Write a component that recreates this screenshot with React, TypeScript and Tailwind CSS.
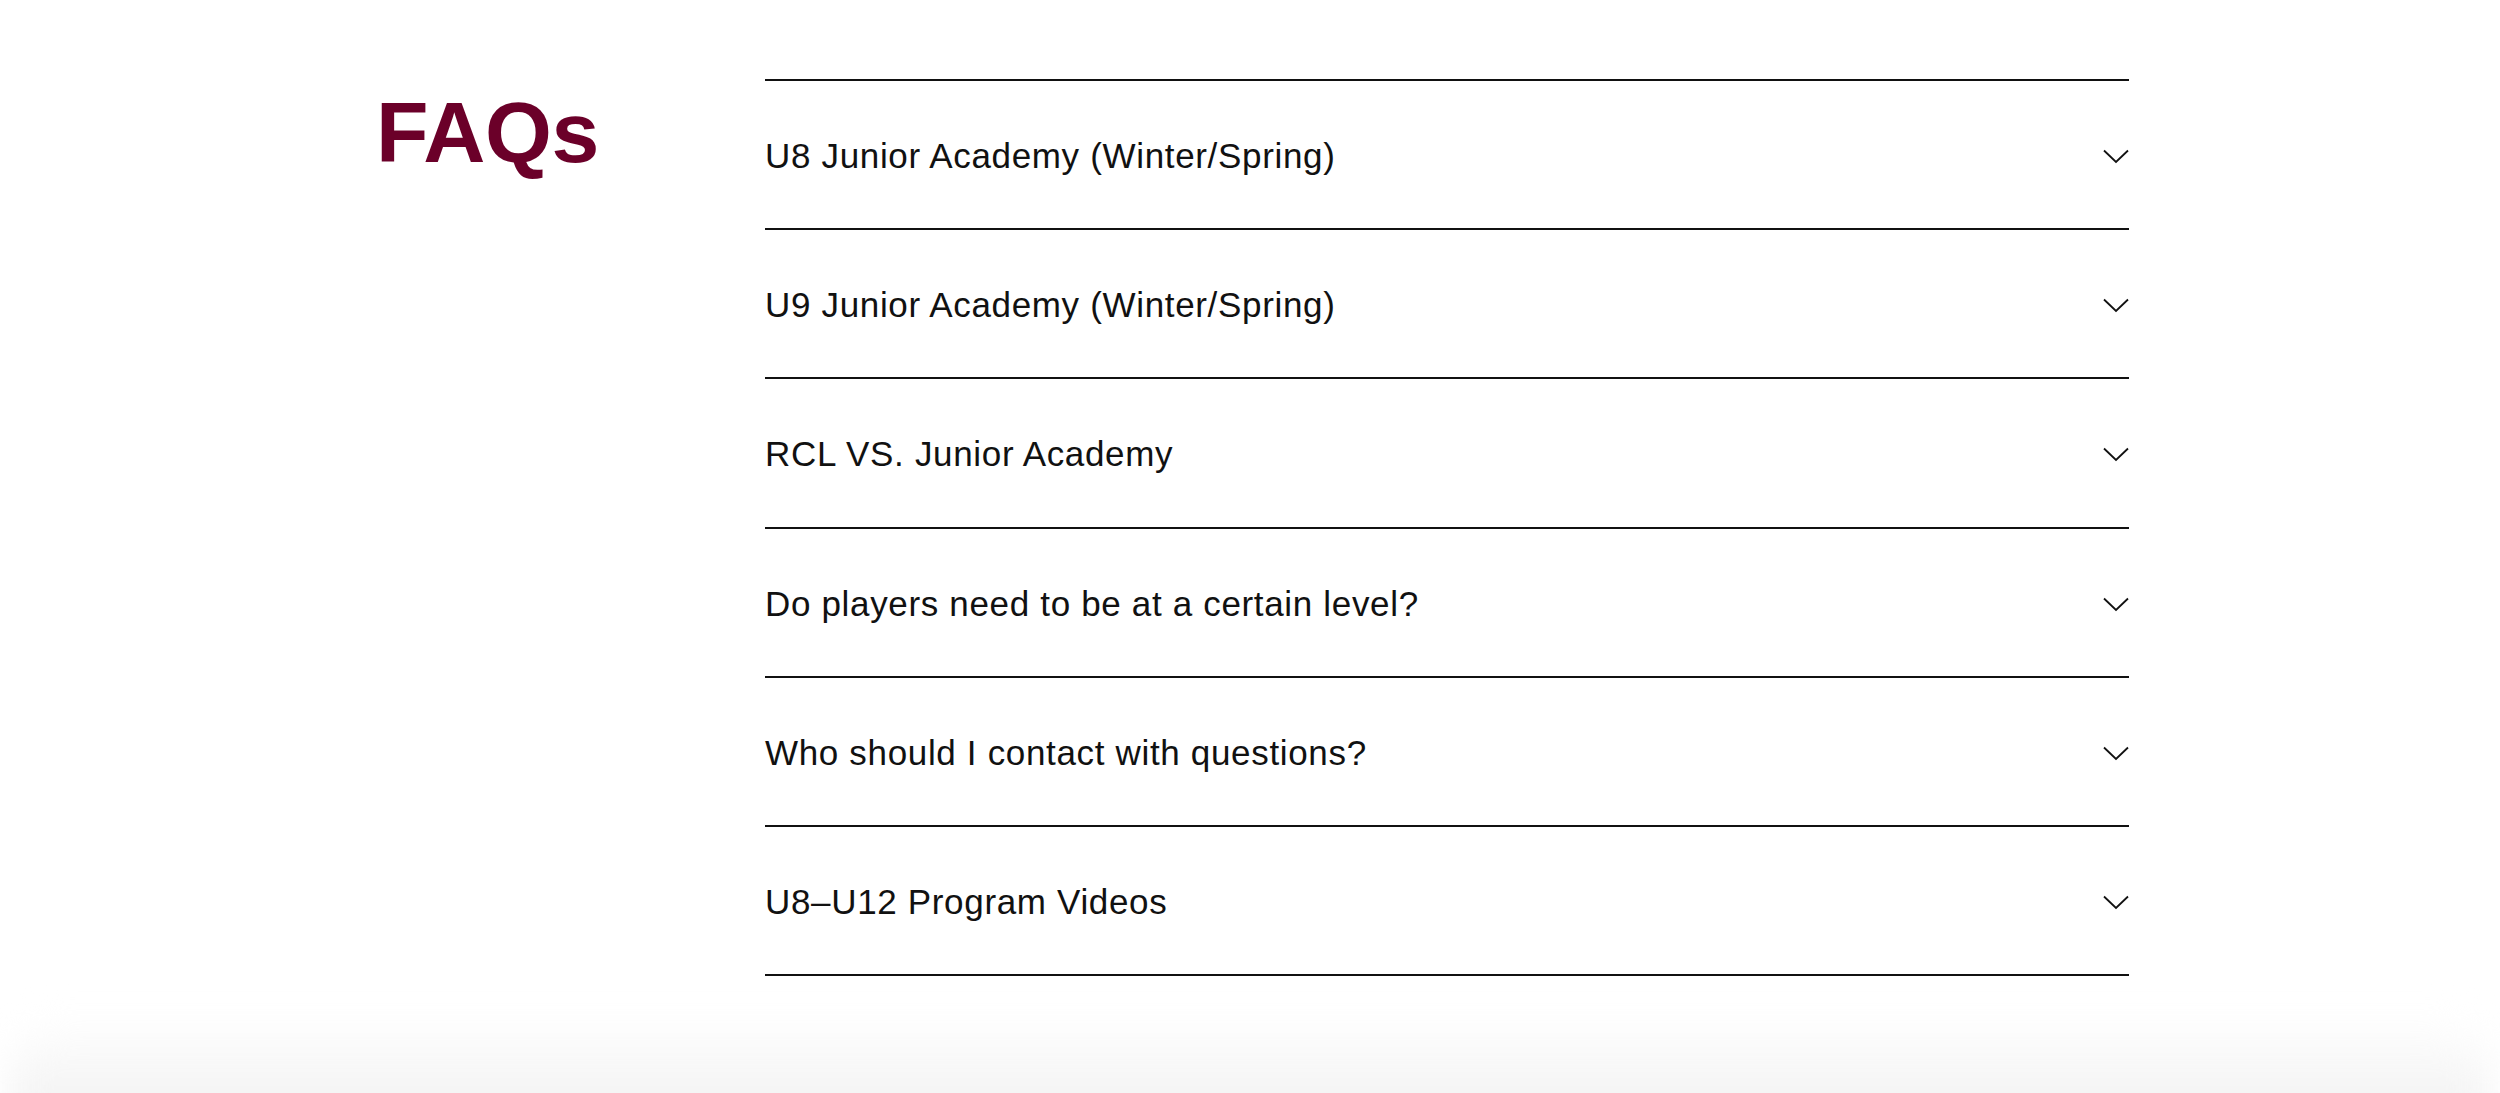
import React from "react";

const items = [
  "U8 Junior Academy (Winter/Spring)",
  "U9 Junior Academy (Winter/Spring)",
  "RCL VS. Junior Academy",
  "Do players need to be at a certain level?",
  "Who should I contact with questions?",
  "U8–U12 Program Videos",
];

function Chevron() {
  return (
    <svg width="26" height="15" viewBox="0 0 26 15" fill="none">
      <polyline points="1,1.5 13,13 25,1.5" stroke="#111" strokeWidth="1.8" strokeLinejoin="miter" />
    </svg>
  );
}

export default function App() {
  return (
    <div className="relative w-full h-[1093px] overflow-hidden bg-white" style={{ fontFamily: '"Liberation Sans", Arial, sans-serif' }}>
      <div className="flex pl-[376px] pt-[79px]">
        <div className="w-[389px] shrink-0">
          <h2 className="mt-[10px] text-[86px] leading-none font-bold tracking-[-0.005em] text-[#6b0029]">FAQs</h2>
        </div>
        <div className="w-[1364px] border-b-2 border-[#111]">
          {items.map((q) => (
            <div key={q} className="h-[149.2px] border-t-2 border-[#111] flex items-center justify-between pt-[2px]">
              <span className="text-[35px] text-[#111] leading-none tracking-[0.019em]">{q}</span>
              <span className="mt-[2px]"><Chevron /></span>
            </div>
          ))}
        </div>
      </div>
      <div className="mt-[52px] mx-[10px] h-[120px] rounded-[40px] bg-gradient-to-b from-[#fdfdfd] to-[#eeeeee] blur-[18px]" />
    </div>
  );
}
